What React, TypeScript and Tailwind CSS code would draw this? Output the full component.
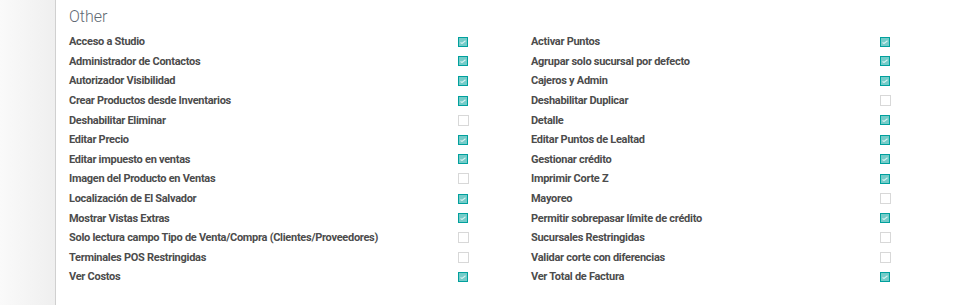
import React from "react";

const left: [string, boolean][] = [
  ["Acceso a Studio", true],
  ["Administrador de Contactos", true],
  ["Autorizador Visibilidad", true],
  ["Crear Productos desde Inventarios", true],
  ["Deshabilitar Eliminar", false],
  ["Editar Precio", true],
  ["Editar impuesto en ventas", true],
  ["Imagen del Producto en Ventas", false],
  ["Localización de El Salvador", true],
  ["Mostrar Vistas Extras", true],
  ["Solo lectura campo Tipo de Venta/Compra (Clientes/Proveedores)", false],
  ["Terminales POS Restringidas", false],
  ["Ver Costos", true],
];

const right: [string, boolean][] = [
  ["Activar Puntos", true],
  ["Agrupar solo sucursal por defecto", true],
  ["Cajeros y Admin", true],
  ["Deshabilitar Duplicar", false],
  ["Detalle", true],
  ["Editar Puntos de Lealtad", true],
  ["Gestionar crédito", true],
  ["Imprimir Corte Z", true],
  ["Mayoreo", false],
  ["Permitir sobrepasar límite de crédito", true],
  ["Sucursales Restringidas", false],
  ["Validar corte con diferencias", false],
  ["Ver Total de Factura", true],
];

function Check({ on }: { on: boolean }) {
  if (on) {
    return (
      <div className="w-[10px] h-[10px] border border-[#01a09d] bg-[#74ccc9] flex items-center justify-center">
        <svg width="6" height="4" viewBox="0 0 6 4">
          <path d="M0.5 2.5 L2 3.5 L5.5 0.8" stroke="#d6f0ef" strokeWidth="1.1" fill="none" />
        </svg>
      </div>
    );
  }
  return <div className="w-[11px] h-[11px] border border-[#d8d8d8] bg-white" />;
}

function Col({ rows, labelClass }: { rows: [string, boolean][]; labelClass: string }) {
  return (
    <div className="w-[462px] shrink-0 flex flex-col">
      {rows.map(([label, on]) => (
        <div key={label} className="h-[19.6px] flex items-center">
          <div
            className={`${labelClass} shrink-0 text-[11px] font-bold tracking-[-0.28px] text-[#4c4c4c] whitespace-nowrap leading-none`}
          >
            {label}
          </div>
          <Check on={on} />
        </div>
      ))}
    </div>
  );
}

export default function App() {
  return (
    <div
      className="w-[955px] h-[305px] flex bg-white overflow-hidden"
      style={{ fontFamily: "Roboto, 'Noto Sans', sans-serif" }}
    >
      <div className="w-[56px] shrink-0 h-full bg-gradient-to-r from-[#fafafa] to-[#efefef] border-r border-[#d0d0d0]" />
      <div className="flex-1 pl-[13px] pt-[7px]">
        <div className="text-[16px] font-light text-[#5f6a73] leading-[20px] mb-[5px]">Other</div>
        <div className="flex">
          <Col rows={left} labelClass="w-[389px]" />
          <Col rows={right} labelClass="w-[349px]" />
        </div>
      </div>
    </div>
  );
}
